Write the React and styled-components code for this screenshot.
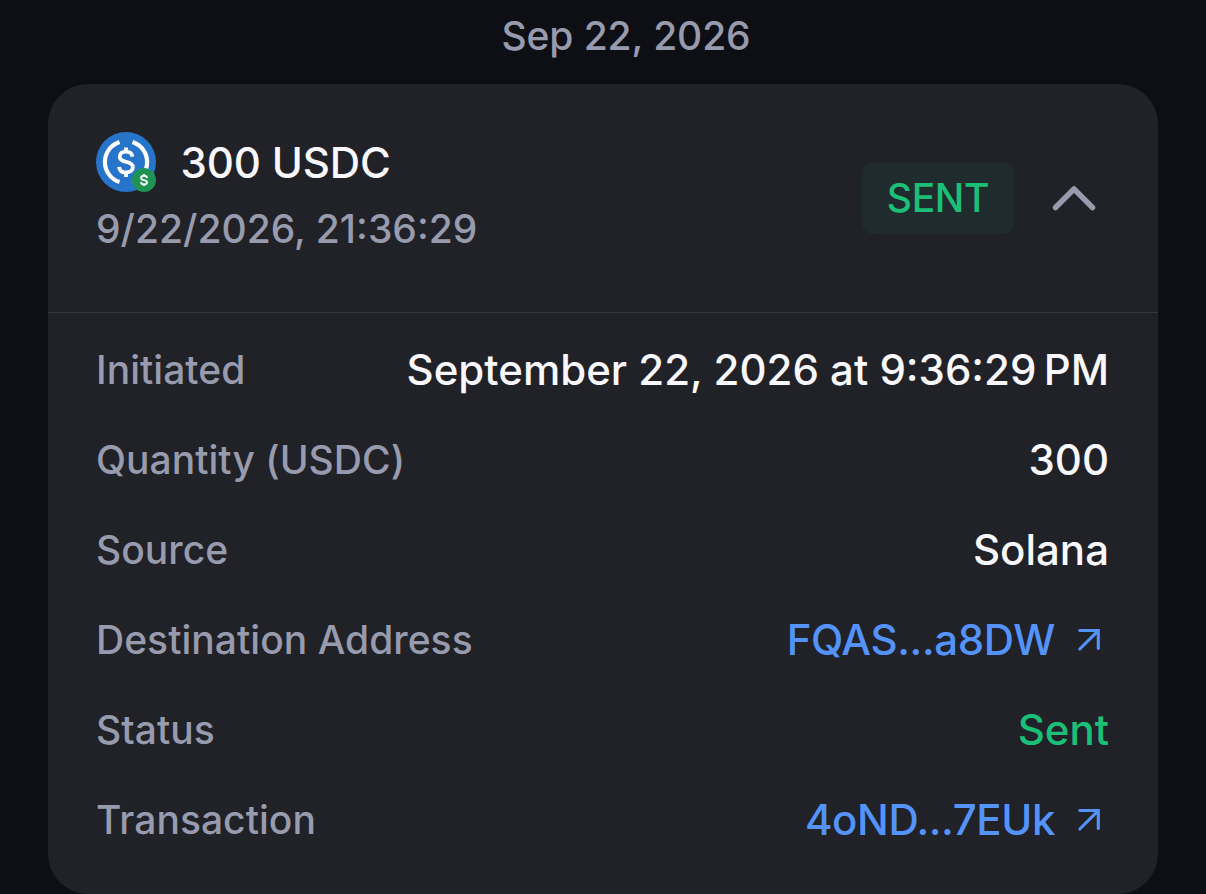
import React from "react";
import styled, { createGlobalStyle } from "styled-components";

const GlobalStyle = createGlobalStyle`
  * { box-sizing: border-box; }
  body { margin: 0; background: #0e0f14; font-family: Inter, sans-serif; font-weight: 500; overflow: hidden; }
`;
const Page = styled.main`
  height: 894px;
  padding: 11px 48px 0;
  overflow: hidden;
`;
const DateHeading = styled.div`
  height: 73px;
  padding-left: 46px;
  text-align: center;
  color: #989bad;
  font-size: 39px;
  line-height: 49px;
  letter-spacing: -0.1px;
`;
const Card = styled.section`
  width: 1110px;
  height: 810px;
  background: #202227;
  border-radius: 40px;
`;
const Header = styled.header`
  height: 229px;
  padding: 48px 62px 0 48px;
  display: flex;
  justify-content: space-between;
  border-bottom: 1px solid #34363c;
`;
const Asset = styled.div`
  display: flex;
  align-items: center;
  gap: 24.5px;
  height: 60px;
`;
const Amount = styled.div`
  color: #f9f8fe;
  font-size: 42px;
  line-height: 60px;
  padding-top: 1px;
  letter-spacing: -0.1px;
`;
const Timestamp = styled.div`
  color: #989bad;
  font-size: 39px;
  line-height: 49px;
  margin-top: 12px;
`;
const Actions = styled.div`
  display: flex;
  height: 72px;
  margin-top: 30px;
  align-items: center;
  gap: 38px;
`;
const Badge = styled.div`
  width: 152px;
  height: 72px;
  border-radius: 12px;
  background: #1f2b2d;
  color: #1bbf78;
  font-size: 39px;
  line-height: 71px;
  letter-spacing: -0.3px;
  text-align: center;
`;
const Details = styled.div`
  padding: 11.5px 49px 0 48px;
`;
const Row = styled.div`
  display: flex;
  justify-content: space-between;
  align-items: center;
  height: 90px;
`;
const Label = styled.span`
  color: #989bad;
  font-size: 39px;
  letter-spacing: 0.03px;
`;
const Value = styled.span`
  color: ${(p) => p.$color || "#f9f8fe"};
  font-size: 42px;
  letter-spacing: ${(p) => p.$tracking || "0"};
  white-space: nowrap;
`;
const LinkValue = styled.span`
  display: flex;
  align-items: center;
  gap: 22px;
  padding-right: 8px;
`;

const Coin = () => (
  <svg width="60" height="60" viewBox="0 0 60 60" fill="none">
    <circle cx="30" cy="30" r="30" fill="#2775ca" />
    <path d="M23.500 10A21 21 0 0 0 23.500 50M36.500 10A21 21 0 0 1 36.500 50" stroke="#fff" strokeWidth="4.200" />
    <path d="M36.500 24.600c-.5-3.400-2.800-5-6.500-5s-6.300 1.700-6.300 4.900 2.300 4.500 6.300 5.300 6.900 1.900 6.900 5.300-2.700 5.400-6.900 5.400-6.500-1.900-7-5.600M30 15.500v4.500M30 40v5" stroke="#fff" strokeWidth="3.800" />
    <circle cx="48" cy="48" r="12" fill="#1f9254" />
    <path d="M51 46c-.2-1.600-1.200-2.200-3-2.200s-2.900.8-2.900 2.100 1 1.800 2.900 2.200 3 .8 3 2.200-1.200 2.200-3 2.200-2.900-.8-3.100-2.300M48 42v2M48 52v2" stroke="#fff" strokeWidth="1.900" />
  </svg>
);
const Chevron = () => (
  <svg width="44" height="28" viewBox="0 0 44 28" fill="none">
    <path d="M3.500 23.500 22 5 40.500 23.500" stroke="#989bad" strokeWidth="5.500" strokeLinecap="round" strokeLinejoin="round" />
  </svg>
);
const ArrowOut = () => (
  <svg width="24" height="24" viewBox="0 0 24 24" fill="none">
    <path d="M2.800 2.500h18.500v18M21 2.800 2.800 21" stroke="#5393fb" strokeWidth="3.100" strokeLinecap="round" />
  </svg>
);

const rows = [
  { label: "Initiated", value: "September 22, 2026 at 9:36:29\u202fPM" },
  { label: "Quantity (USDC)", value: "300" },
  { label: "Source", value: "Solana" },
  { label: "Destination Address", value: "FQAS...a8DW", link: true },
  { label: "Status", value: "Sent", color: "#1bbf78" },
  { label: "Transaction", value: "4oND...7EUk", link: true },
];

export default function App() {
  return (
    <Page>
      <GlobalStyle />
      <DateHeading>Sep 22, 2026</DateHeading>
      <Card>
        <Header>
          <div>
            <Asset><Coin /><Amount>300 USDC</Amount></Asset>
            <Timestamp>9/22/2026, 21:36:29</Timestamp>
          </div>
          <Actions><Badge>SENT</Badge><Chevron /></Actions>
        </Header>
        <Details>
          {rows.map((r) => (
            <Row key={r.label}>
              <Label>{r.label}</Label>
              {r.link ? (
                <LinkValue><Value $color="#5393fb" $tracking="-0.4px">{r.value}</Value><ArrowOut /></LinkValue>
              ) : (
                <Value $color={r.color}>{r.value}</Value>
              )}
            </Row>
          ))}
        </Details>
      </Card>
    </Page>
  );
}
